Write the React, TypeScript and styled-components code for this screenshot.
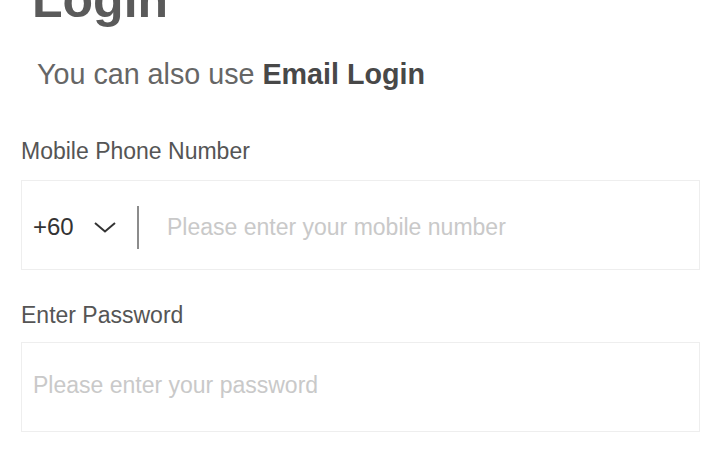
import React from "react";
import styled, { createGlobalStyle } from "styled-components";

const Global = createGlobalStyle`
  html, body { margin: 0; padding: 0; background: #ffffff; overflow: hidden; }
  body { font-family: "Liberation Sans", Arial, sans-serif; }
  * { box-sizing: border-box; }
`;

const Page = styled.div`
  display: flex;
  flex-direction: column;
  padding: 0 20px 0 21px;
  width: 720px;
  height: 450px;
`;

const Title = styled.h1`
  margin: -25px 0 0 11px;
  font-size: 50px;
  line-height: 50px;
  font-weight: 700;
  color: #5a5a5a;
`;

const Subtitle = styled.p`
  margin: 35px 0 0 16px;
  font-size: 28.7px;
  line-height: 28px;
  color: #666666;
  b { color: #484848; font-weight: 700; }
`;

const Label = styled.label<{ $gap: number }>`
  display: block;
  margin-top: ${(p) => p.$gap}px;
  font-size: 23px;
  line-height: 23px;
  color: #555555;
`;

const Field = styled.div<{ $gap: number; $pt?: number }>`
  margin-top: ${(p) => p.$gap}px;
  height: 90px;
  border: 1px solid #eeeeee;
  display: flex;
  align-items: center;
  padding: ${(p) => p.$pt ?? 0}px 0 0 11px;
`;

const Code = styled.span`
  font-size: 24px;
  color: #333333;
  width: 41px;
`;

const Chevron = styled.svg`
  margin: 1px 0 0 20px;
  flex: none;
`;

const Divider = styled.span`
  margin-left: 21px;
  width: 2px;
  height: 43px;
  background: #8c8c8c;
  flex: none;
`;

const Input = styled.input<{ $ml?: number }>`
  flex: 1;
  min-width: 0;
  margin-left: ${(p) => p.$ml ?? 0}px;
  border: none;
  outline: none;
  padding: 0;
  background: transparent;
  font-family: "Liberation Sans", Arial, sans-serif;
  font-size: 23px;
  color: #333;
  &::placeholder { color: #c9c9c9; }
`;

export default function App() {
  return (
    <>
      <Global />
      <Page>
        <Title>Login</Title>
        <Subtitle>
          You can also use <b>Email Login</b>
        </Subtitle>
        <Label $gap={52}>Mobile Phone Number</Label>
        <Field $gap={17} $pt={4}>
          <Code>+60</Code>
          <Chevron width="22" height="11" viewBox="0 0 22 11">
            <polyline points="1,1 11,9.5 21,1" fill="none" stroke="#333" strokeWidth="2" />
          </Chevron>
          <Divider />
          <Input $ml={28} placeholder="Please enter your mobile number" />
        </Field>
        <Label $gap={34}>Enter Password</Label>
        <Field $gap={15}>
          <Input type="password" placeholder="Please enter your password" style={{ marginTop: -4 }} />
        </Field>
      </Page>
    </>
  );
}
